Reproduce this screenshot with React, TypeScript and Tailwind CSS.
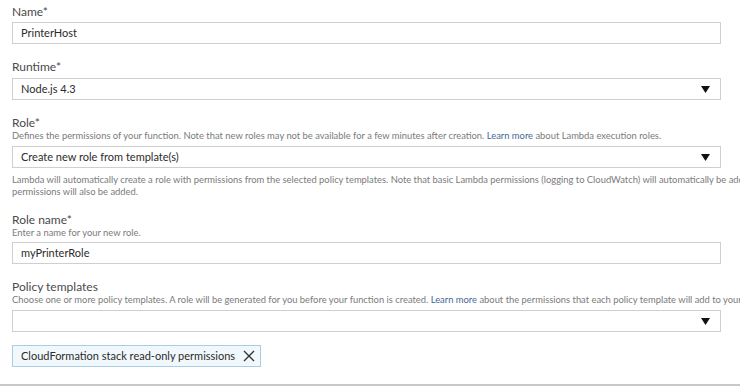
const font = { fontFamily: "Lato, 'Open Sans', sans-serif" };

function Caret() {
  return (
    <svg width="9" height="7" viewBox="0 0 9 7" className="mr-[2px]">
      <path d="M0 0h9L4.5 7z" fill="#111" />
    </svg>
  );
}

function Label({ children }: { children: React.ReactNode }) {
  return <div className="text-[12px] leading-[14px] text-[#4a4a4a]">{children}</div>;
}

function Hint({ children }: { children: React.ReactNode }) {
  return <div className="text-[9.4px] leading-[12px] text-[#7b7b7b]">{children}</div>;
}

function Box({ value, select }: { value?: string; select?: boolean }) {
  return (
    <div className="flex h-[22px] w-[709px] items-center justify-between border border-[#cfcfcf] bg-white px-[8px] text-[11px] text-[#2b2b2b]">
      <span>{value}</span>
      {select && <Caret />}
    </div>
  );
}

export default function App() {
  return (
    <div className="h-[386px] w-[740px] overflow-hidden bg-white" style={font}>
      <div className="flex h-[384px] flex-col pl-[12px] pt-[5px]">
        <Label>Name*</Label>
        <div className="mt-[3px]">
          <Box value="PrinterHost" />
        </div>

        <div className="mt-[16px]">
          <Label>Runtime*</Label>
        </div>
        <div className="mt-[4px]">
          <Box value="Node.js 4.3" select />
        </div>

        <div className="mt-[16px]">
          <Label>Role*</Label>
        </div>
        <Hint>
          Defines the permissions of your function. Note that new roles may not be available for a few minutes after creation.{" "}
          <span className="text-[#44699a]">Learn more</span> about Lambda execution roles.
        </Hint>
        <div className="mt-[4px]">
          <Box value="Create new role from template(s)" select />
        </div>
        <div className="mt-[6px] w-[728px] overflow-hidden whitespace-nowrap">
          <Hint>
            Lambda will automatically create a role with permissions from the selected policy templates. Note that basic Lambda permissions (logging to CloudWatch) will automatically be added.
          </Hint>
          <Hint>permissions will also be added.</Hint>
        </div>

        <div className="mt-[15px]">
          <Label>Role name*</Label>
        </div>
        <Hint>Enter a name for your new role.</Hint>
        <div className="mt-[3px]">
          <Box value="myPrinterRole" />
        </div>

        <div className="mt-[16px]">
          <Label>Policy templates</Label>
        </div>
        <div className="w-[728px] overflow-hidden whitespace-nowrap">
          <Hint>
            Choose one or more policy templates. A role will be generated for you before your function is created.{" "}
            <span className="text-[#44699a]">Learn more</span> about the permissions that each policy template will add to your role.
          </Hint>
        </div>
        <div className="mt-[4px]">
          <Box select />
        </div>
        <div className="mt-[10px]">
          <div className="inline-flex h-[22px] items-center gap-[8px] border border-[#a9cde4] bg-[#f1f8fc] pl-[8px] pr-[5px] text-[11px] text-[#2b2b2b]">
            <span>CloudFormation stack read-only permissions</span>
            <svg width="12" height="12" viewBox="0 0 12 12">
              <path d="M1 1l10 10M11 1L1 11" stroke="#333" strokeWidth="1.4" />
            </svg>
          </div>
        </div>
      </div>
      <div className="h-[2px] w-full bg-[#c8c8c8]" />
    </div>
  );
}
